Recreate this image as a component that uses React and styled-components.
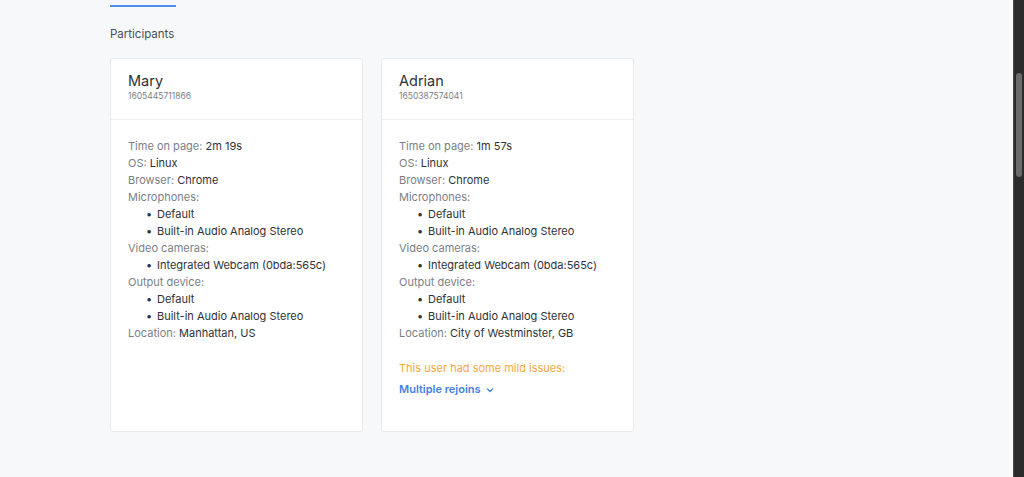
import React from 'react'
import styled, { createGlobalStyle } from 'styled-components'

const Reset = createGlobalStyle`
  html, body {
    margin: 0;
    padding: 0;
    height: 100%;
    overflow: hidden;
  }
  body {
    font-family: Inter, 'Noto Sans', sans-serif;
    background: #f7f8fa;
    color: #333;
  }
`

const Page = styled.div`
  display: flex;
  height: 477px;
`

const Main = styled.main`
  flex: 1;
  padding: 0 0 0 110px;
`

const TabLine = styled.div`
  width: 66px;
  height: 2px;
  margin-top: 5px;
  background: #4d8ef0;
`

const SectionTitle = styled.h3`
  margin: 20px 0 0;
  font-size: 11.5px;
  font-weight: 400;
  color: #4a4f57;
  line-height: 14px;
`

const Cards = styled.div`
  display: flex;
  gap: 18px;
  margin-top: 17px;
`

const Card = styled.section`
  width: 253px;
  height: 374px;
  box-sizing: border-box;
  background: #fff;
  border: 1px solid #e9ebee;
  border-radius: 3px;
`

const CardHead = styled.header`
  height: 61px;
  box-sizing: border-box;
  padding: 13px 17px 0;
  border-bottom: 1px solid #eceef1;
`

const Name = styled.div`
  font-size: 14.5px;
  line-height: 18px;
  color: #2e3238;
`

const Uid = styled.div`
  margin-top: 1px;
  font-size: 8.5px;
  line-height: 10px;
  color: #7a7f87;
`

const CardBody = styled.div`
  padding: 18px 17px 0;
  font-size: 11px;
  line-height: 17px;
`

const Row = styled.div`
  color: #7a7f87;
  white-space: nowrap;
`

const Value = styled.span`
  color: #2e3238;
`

const List = styled.ul`
  margin: 0;
  padding: 0 0 0 18px;
  list-style: none;
`

const Item = styled.li`
  color: #2e3238;
  white-space: nowrap;
  &::before {
    content: '•';
    display: inline-block;
    width: 11px;
  }
`

const Issues = styled.div`
  margin-top: 18px;
  color: #f4a93b;
`

const IssueLink = styled.button`
  display: flex;
  align-items: center;
  gap: 5px;
  margin-top: 4px;
  padding: 0;
  border: 0;
  background: none;
  font: inherit;
  font-weight: 600;
  color: #3f7fe6;
  cursor: pointer;
`

const ScrollTrack = styled.div`
  width: 10px;
  background: #2b2b2b;
  border-left: 1px solid #4a4a4a;
  display: flex;
  justify-content: center;
`

const ScrollThumb = styled.div`
  width: 6px;
  height: 104px;
  margin-top: 73px;
  border-radius: 3px;
  background: #6b6b6b;
`

const participants = [
  {
    name: 'Mary',
    id: '1605445711866',
    time: '2m 19s',
    location: 'Manhattan, US',
  },
  {
    name: 'Adrian',
    id: '1650387574041',
    time: '1m 57s',
    location: 'City of Westminster, GB',
    issues: ['Multiple rejoins'],
  },
]

const Chevron = () => (
  <svg width="8" height="8" viewBox="0 0 8 8" fill="none" stroke="currentColor" strokeWidth="1.2" strokeLinecap="round" strokeLinejoin="round">
    <path d="M1.5 3 L4 5.5 L6.5 3" />
  </svg>
)

const ParticipantCard = ({ p }) => (
  <Card>
    <CardHead>
      <Name>{p.name}</Name>
      <Uid>{p.id}</Uid>
    </CardHead>
    <CardBody>
      <Row>Time on page: <Value>{p.time}</Value></Row>
      <Row>OS: <Value>Linux</Value></Row>
      <Row>Browser: <Value>Chrome</Value></Row>
      <Row>Microphones:</Row>
      <List>
        <Item>Default</Item>
        <Item>Built-in Audio Analog Stereo</Item>
      </List>
      <Row>Video cameras:</Row>
      <List>
        <Item>Integrated Webcam (0bda:565c)</Item>
      </List>
      <Row>Output device:</Row>
      <List>
        <Item>Default</Item>
        <Item>Built-in Audio Analog Stereo</Item>
      </List>
      <Row>Location: <Value>{p.location}</Value></Row>
      {p.issues && (
        <>
          <Issues>This user had some mild issues:</Issues>
          {p.issues.map(i => (
            <IssueLink key={i}>{i} <Chevron /></IssueLink>
          ))}
        </>
      )}
    </CardBody>
  </Card>
)

export default function App() {
  return (
    <Page>
      <Reset />
      <Main>
        <TabLine />
        <SectionTitle>Participants</SectionTitle>
        <Cards>
          {participants.map(p => <ParticipantCard key={p.id} p={p} />)}
        </Cards>
      </Main>
      <ScrollTrack>
        <ScrollThumb />
      </ScrollTrack>
    </Page>
  )
}
